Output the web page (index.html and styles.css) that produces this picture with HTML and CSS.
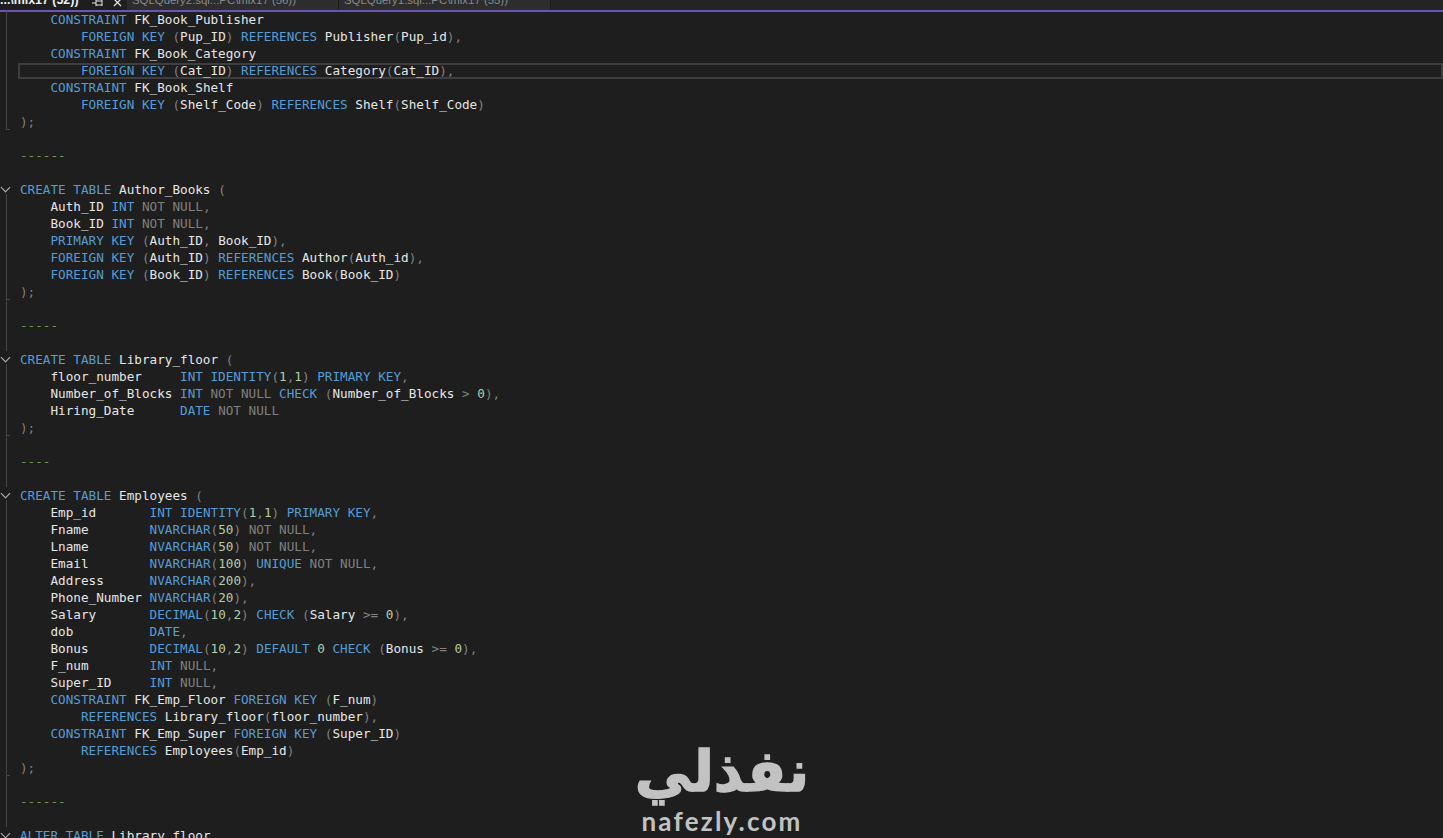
FILE: index.html
```html
<!DOCTYPE html>
<html lang="en">
<head>
<meta charset="utf-8">
<title>SQL Editor</title>
<link rel="stylesheet" href="styles.css">
</head>
<body>
<div class="tabbar">
  <div class="tab active"><span class="tab-label">...\mix17 (52))</span>
    <svg class="tab-icon pin" width="11" height="7" viewBox="0 0 11 7"><path d="M0 3h4M4 0v6M4 1h6M4 5h6M10 0v6" fill="none" stroke="#e8e8e8" stroke-width="1"/></svg>
    <svg class="tab-icon close" width="9" height="7" viewBox="0 0 9 7"><path d="M1-1l7 7M8-1L1 6" fill="none" stroke="#e8e8e8" stroke-width="1.2"/></svg>
  </div>
  <div class="tab"><span class="tab-label">SQLQuery2.sql...PC\mix17 (56))</span></div>
  <div class="tab"><span class="tab-label">SQLQuery1.sql...PC\mix17 (55))</span></div>
</div>
<main class="editor">
<div class="row"><i class="g line"></i><code>    <b>CONSTRAINT</b> FK_Book_Publisher</code></div>
<div class="row"><i class="g line"></i><code>        <b>FOREIGN KEY</b> <s>(</s>Pup_ID<s>)</s> <b>REFERENCES</b> Publisher<s>(</s>Pup_id<s>),</s></code></div>
<div class="row"><i class="g line"></i><code>    <b>CONSTRAINT</b> FK_Book_Category</code></div>
<div class="row current"><i class="g line"></i><code>        <b>FOREIGN KEY</b> <s>(</s>Cat_ID<s>)</s> <b>REFERENCES</b> Category<s>(</s>Cat_ID<s>),</s></code></div>
<div class="row"><i class="g line"></i><code>    <b>CONSTRAINT</b> FK_Book_Shelf</code></div>
<div class="row"><i class="g line"></i><code>        <b>FOREIGN KEY</b> <s>(</s>Shelf_Code<s>)</s> <b>REFERENCES</b> Shelf<s>(</s>Shelf_Code<s>)</s></code></div>
<div class="row"><i class="g end"></i><code><s>);</s></code></div>
<div class="row"><i class="g none"></i><code> </code></div>
<div class="row"><i class="g none"></i><code><u>------</u></code></div>
<div class="row"><i class="g none"></i><code> </code></div>
<div class="row"><i class="g open"></i><code><b>CREATE TABLE</b> Author_Books <s>(</s></code></div>
<div class="row"><i class="g line"></i><code>    Auth_ID <b>INT</b> <s>NOT NULL,</s></code></div>
<div class="row"><i class="g line"></i><code>    Book_ID <b>INT</b> <s>NOT NULL,</s></code></div>
<div class="row"><i class="g line"></i><code>    <b>PRIMARY KEY</b> <s>(</s>Auth_ID<s>,</s> Book_ID<s>),</s></code></div>
<div class="row"><i class="g line"></i><code>    <b>FOREIGN KEY</b> <s>(</s>Auth_ID<s>)</s> <b>REFERENCES</b> Author<s>(</s>Auth_id<s>),</s></code></div>
<div class="row"><i class="g line"></i><code>    <b>FOREIGN KEY</b> <s>(</s>Book_ID<s>)</s> <b>REFERENCES</b> Book<s>(</s>Book_ID<s>)</s></code></div>
<div class="row"><i class="g end"></i><code><s>);</s></code></div>
<div class="row"><i class="g line"></i><code> </code></div>
<div class="row"><i class="g line"></i><code><u>-----</u></code></div>
<div class="row"><i class="g line"></i><code> </code></div>
<div class="row"><i class="g open"></i><code><b>CREATE TABLE</b> Library_floor <s>(</s></code></div>
<div class="row"><i class="g line"></i><code>    floor_number     <b>INT</b> <b>IDENTITY</b><s>(</s><em>1</em><s>,</s><em>1</em><s>)</s> <b>PRIMARY KEY</b><s>,</s></code></div>
<div class="row"><i class="g line"></i><code>    Number_of_Blocks <b>INT</b> <s>NOT NULL</s> <b>CHECK</b> <s>(</s>Number_of_Blocks <s>&gt;</s> <em>0</em><s>),</s></code></div>
<div class="row"><i class="g line"></i><code>    Hiring_Date      <b>DATE</b> <s>NOT NULL</s></code></div>
<div class="row"><i class="g end"></i><code><s>);</s></code></div>
<div class="row"><i class="g line"></i><code> </code></div>
<div class="row"><i class="g line"></i><code><u>----</u></code></div>
<div class="row"><i class="g line"></i><code> </code></div>
<div class="row"><i class="g open"></i><code><b>CREATE TABLE</b> Employees <s>(</s></code></div>
<div class="row"><i class="g line"></i><code>    Emp_id       <b>INT</b> <b>IDENTITY</b><s>(</s><em>1</em><s>,</s><em>1</em><s>)</s> <b>PRIMARY KEY</b><s>,</s></code></div>
<div class="row"><i class="g line"></i><code>    Fname        <b>NVARCHAR</b><s>(</s><em>50</em><s>) NOT NULL,</s></code></div>
<div class="row"><i class="g line"></i><code>    Lname        <b>NVARCHAR</b><s>(</s><em>50</em><s>) NOT NULL,</s></code></div>
<div class="row"><i class="g line"></i><code>    Email        <b>NVARCHAR</b><s>(</s><em>100</em><s>)</s> <b>UNIQUE</b> <s>NOT NULL,</s></code></div>
<div class="row"><i class="g line"></i><code>    Address      <b>NVARCHAR</b><s>(</s><em>200</em><s>),</s></code></div>
<div class="row"><i class="g line"></i><code>    Phone_Number <b>NVARCHAR</b><s>(</s><em>20</em><s>),</s></code></div>
<div class="row"><i class="g line"></i><code>    Salary       <b>DECIMAL</b><s>(</s><em>10</em><s>,</s><em>2</em><s>)</s> <b>CHECK</b> <s>(</s>Salary <s>&gt;=</s> <em>0</em><s>),</s></code></div>
<div class="row"><i class="g line"></i><code>    dob          <b>DATE</b><s>,</s></code></div>
<div class="row"><i class="g line"></i><code>    Bonus        <b>DECIMAL</b><s>(</s><em>10</em><s>,</s><em>2</em><s>)</s> <b>DEFAULT</b> <em>0</em> <b>CHECK</b> <s>(</s>Bonus <s>&gt;=</s> <em>0</em><s>),</s></code></div>
<div class="row"><i class="g line"></i><code>    F_num        <b>INT</b> <s>NULL,</s></code></div>
<div class="row"><i class="g line"></i><code>    Super_ID     <b>INT</b> <s>NULL,</s></code></div>
<div class="row"><i class="g line"></i><code>    <b>CONSTRAINT</b> FK_Emp_Floor <b>FOREIGN KEY</b> <s>(</s>F_num<s>)</s></code></div>
<div class="row"><i class="g line"></i><code>        <b>REFERENCES</b> Library_floor<s>(</s>floor_number<s>),</s></code></div>
<div class="row"><i class="g line"></i><code>    <b>CONSTRAINT</b> FK_Emp_Super <b>FOREIGN KEY</b> <s>(</s>Super_ID<s>)</s></code></div>
<div class="row"><i class="g line"></i><code>        <b>REFERENCES</b> Employees<s>(</s>Emp_id<s>)</s></code></div>
<div class="row"><i class="g end"></i><code><s>);</s></code></div>
<div class="row"><i class="g line"></i><code> </code></div>
<div class="row"><i class="g line"></i><code><u>------</u></code></div>
<div class="row"><i class="g line"></i><code> </code></div>
<div class="row"><i class="g open"></i><code><b>ALTER TABLE</b> Library_floor</code></div>
</main>
<div class="watermark">
  <div class="wm-ar" dir="rtl">نفذلي</div>
  <div class="wm-en">nafezly.com</div>
</div>
</body>
</html>
```
FILE: styles.css
```css
html, body {
  margin: 0;
  height: 100%;
  overflow: hidden;
  background: #1e1e1e;
}
.tabbar {
  display: flex;
  height: 10px;
  overflow: hidden;
  background: #242424;
  border-bottom: 2px solid #6a54b8;
  font-family: "Liberation Sans", sans-serif;
  font-size: 11.4px;
  line-height: 14px;
  color: #8a8a8a;
}
.tab {
  display: flex;
  align-items: flex-start;
  width: 212px;
  height: 10px;
  padding-left: 5px;
  box-sizing: border-box;
  background: #2d2d2d;
  border-right: 1px solid #1e1e1e;
}
.tab-label { white-space: nowrap; margin-top: -7px; }
.tab.active {
  width: 127px;
  padding-left: 0;
  background: #1e1e1e;
  color: #f0f0f0;
  font-size: 12.4px;
  font-weight: 700;
  border-right: 0;
}
.tab-icon { flex: none; }
.pin { margin-left: 13px; }
.close { margin-left: 10px; }
.editor {
  font-family: "DejaVu Sans Mono", monospace;
  font-size: 12.66px;
  line-height: 17px;
  color: #e6e6e6;
  margin-top: -1px;
}
.row { display: flex; height: 17px; }
.row.current { position: relative; margin-left: 18px; }
.row.current::after {
  content: "";
  position: absolute;
  left: 0;
  right: 0;
  top: 1px;
  bottom: 0;
  border: 2px solid #3e3e3e;
}
.row.current .g { margin-left: -18px; }
.row.current code { position: relative; z-index: 1; }
code { font: inherit; white-space: pre; }
code b { font-weight: 400; color: #569cd6; }
code s { text-decoration: none; color: #808080; }
code u { text-decoration: none; color: #6a9955; }
code em { font-style: normal; color: #b5cea8; }
.g { flex: none; width: 20px; position: relative; }
.g::before { content: ""; position: absolute; left: 6px; top: 0; bottom: 0; width: 1px; background: #454545; }
.g.none::before { display: none; }
.g.end::after { content: ""; position: absolute; left: 6px; bottom: 0; width: 4px; height: 1px; background: #454545; }
.g.open::before { top: 13px; }
.g.open::after {
  content: ""; position: absolute; left: 2px; top: 3px; width: 6px; height: 6px;
  border-right: 1px solid #b8b8b8; border-bottom: 1px solid #b8b8b8; transform: rotate(45deg);
}
.watermark {
  position: absolute;
  left: 626px;
  top: 738px;
  width: 192px;
  text-align: center;
  color: #c2c2c2;
}
.wm-ar { font-family: "DejaVu Sans", sans-serif; font-weight: 700; font-size: 57px; line-height: 66px; -webkit-text-stroke: 1.5px #c2c2c2; }
.wm-en { font-family: "Lato", sans-serif; font-weight: 700; font-size: 26px; line-height: 30px; letter-spacing: 2.2px; margin-top: 2px; }
```
